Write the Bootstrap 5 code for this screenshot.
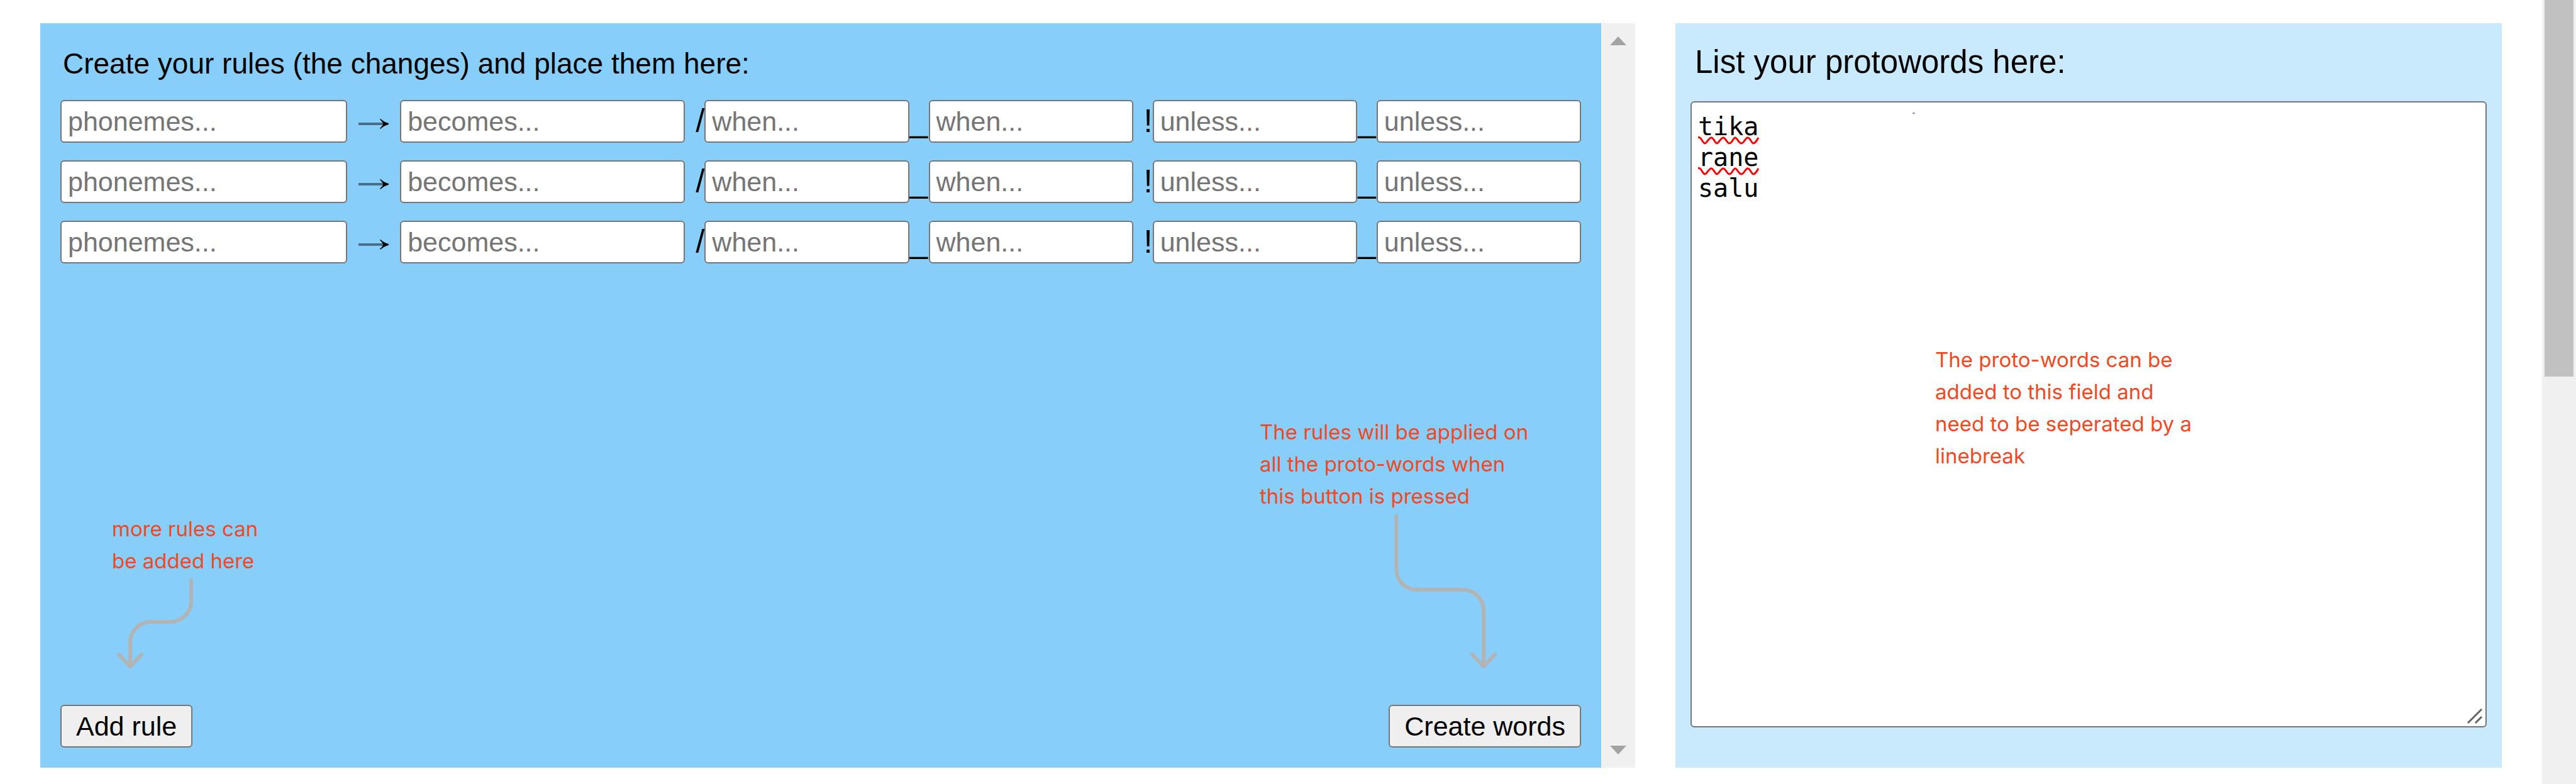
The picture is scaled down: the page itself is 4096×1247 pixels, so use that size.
<!DOCTYPE html>
<html lang="en">
<head>
<meta charset="utf-8">
<meta name="viewport" content="width=device-width, initial-scale=1">
<title>Sound change rules</title>
<link rel="stylesheet" href="https://cdn.jsdelivr.net/npm/bootstrap@5.3.0/dist/css/bootstrap.min.css">
<style>
  body { font-family: "Liberation Sans", Arial, sans-serif; font-size: 43px; color: #000; background: #fff; }
  .workspace { padding: 37px 64px 26px; gap: 64px; min-width: 0; }
  .rules-panel { flex: 2536 2536 2536px; min-width: 0; background: #87cefa; }
  .rules-body { padding: 32px; min-width: 0; }
  .words-panel { flex: 1314 1314 1314px; min-width: 0; background: #c9e9fd; padding: 30px 24px 64px; }
  .panel-title { font-size: 46px; line-height: 64px; margin: 0 0 26px; padding-left: 4px; font-weight: 400; }
  .words-title { font-size: 51px; line-height: 64px; margin: 0 0 30px; padding-left: 7px; }
  .rule-list { gap: 28px; }
  .rule-list .form-control { height: 68px; width: auto; min-width: 0; padding: 0 10px; font-size: 43px; line-height: 64px; border: 2px solid #767676; border-radius: 6px; color: #000; background: #fff; }
  .rule-list .form-control::placeholder { color: #757575; opacity: 1; }
  .seg-from { flex: 1 1 456px; }
  .seg-to { flex: 1 1 453px; }
  .seg-when { flex: 1 1 325px; }
  .sep { width: 31px; flex: none; font-size: 51px; line-height: 68px; display: flex; justify-content: flex-end; }
  .sep-gap { justify-content: center; }
  .sep-arrow { width: 84px; justify-content: center; align-items: center; padding-top: 8px; }
  .btn-plain { height: 68px; padding: 0 23px; font-size: 43px; line-height: 64px; color: #000; background: #efefef; border: 2px solid #767676; border-radius: 6px; white-space: nowrap; }
  .hint { font-family: Inter, sans-serif; font-size: 33px; font-weight: 400; line-height: 51px; color: #f24822; margin: 0; white-space: nowrap; }
  .hint-add { padding-left: 82px; }
  .hint-arrow { display: block; fill: none; stroke: #b3b3b3; stroke-width: 6; stroke-linecap: round; stroke-linejoin: round; }
  .hint-words { position: absolute; left: 389px; top: 386px; pointer-events: none; }
  .side-track { width: 54px; flex: none; background: #f0f0f0; padding: 21px 0; }
  .side-track svg { display: block; fill: #a3a3a3; }
  .page-track { width: 54px; flex: none; background: #f0f0f0; padding: 0 4px; }
  .page-thumb { height: 48%; background: #c1c1c1; }
  .words-box { position: relative; }
  .words-box textarea.form-control { height: 100%; resize: none; border: 2px solid #767676; border-radius: 6px; padding: 14px 10px; font-family: "DejaVu Sans Mono", monospace; font-size: 40px; line-height: 49px; color: #000; background: #fff; }
  .spell-marks { position: absolute; left: 12px; top: 17px; pointer-events: none; fill: none; stroke: #f00; stroke-width: 3; }
  .grip { position: absolute; right: 6px; bottom: 5px; pointer-events: none; stroke: #636363; stroke-width: 3; }
</style>
</head>
<body>
<svg class="d-none" aria-hidden="true">
  <symbol id="arrow-right" viewBox="0 0 48 18">
    <path d="M0 9H42" stroke="#496f87" stroke-width="4" fill="none"/>
    <path d="M35 1C38 3 40 6 48 8V10C40 12 38 15 35 17L34 16C37 13 39 11 39 9S37 5 34 2Z" fill="#000"/>
  </symbol>
</svg>
<div class="d-flex vh-100 overflow-hidden">
  <main class="workspace d-flex flex-grow-1">
    <section class="rules-panel d-flex">
      <div class="rules-body d-flex flex-column flex-grow-1">
        <h2 class="panel-title">Create your rules (the changes) and place them here:</h2>
        <div class="rule-list d-flex flex-column">
          <div class="d-flex">
            <input class="form-control seg-from" type="text" placeholder="phonemes..." aria-label="Phonemes">
            <span class="sep sep-arrow"><svg width="48" height="18" aria-hidden="true"><use href="#arrow-right"/></svg></span>
            <input class="form-control seg-to" type="text" placeholder="becomes..." aria-label="Becomes">
            <span class="sep">/</span>
            <input class="form-control seg-when" type="text" placeholder="when..." aria-label="When before">
            <span class="sep sep-gap">_</span>
            <input class="form-control seg-when" type="text" placeholder="when..." aria-label="When after">
            <span class="sep">!</span>
            <input class="form-control seg-when" type="text" placeholder="unless..." aria-label="Unless before">
            <span class="sep sep-gap">_</span>
            <input class="form-control seg-when" type="text" placeholder="unless..." aria-label="Unless after">
          </div>
          <div class="d-flex">
            <input class="form-control seg-from" type="text" placeholder="phonemes..." aria-label="Phonemes">
            <span class="sep sep-arrow"><svg width="48" height="18" aria-hidden="true"><use href="#arrow-right"/></svg></span>
            <input class="form-control seg-to" type="text" placeholder="becomes..." aria-label="Becomes">
            <span class="sep">/</span>
            <input class="form-control seg-when" type="text" placeholder="when..." aria-label="When before">
            <span class="sep sep-gap">_</span>
            <input class="form-control seg-when" type="text" placeholder="when..." aria-label="When after">
            <span class="sep">!</span>
            <input class="form-control seg-when" type="text" placeholder="unless..." aria-label="Unless before">
            <span class="sep sep-gap">_</span>
            <input class="form-control seg-when" type="text" placeholder="unless..." aria-label="Unless after">
          </div>
          <div class="d-flex">
            <input class="form-control seg-from" type="text" placeholder="phonemes..." aria-label="Phonemes">
            <span class="sep sep-arrow"><svg width="48" height="18" aria-hidden="true"><use href="#arrow-right"/></svg></span>
            <input class="form-control seg-to" type="text" placeholder="becomes..." aria-label="Becomes">
            <span class="sep">/</span>
            <input class="form-control seg-when" type="text" placeholder="when..." aria-label="When before">
            <span class="sep sep-gap">_</span>
            <input class="form-control seg-when" type="text" placeholder="when..." aria-label="When after">
            <span class="sep">!</span>
            <input class="form-control seg-when" type="text" placeholder="unless..." aria-label="Unless before">
            <span class="sep sep-gap">_</span>
            <input class="form-control seg-when" type="text" placeholder="unless..." aria-label="Unless after">
          </div>
        </div>
        <div class="d-flex justify-content-between align-items-end mt-auto">
          <div class="d-flex flex-column align-items-start">
            <p class="hint hint-add">more rules can<br>be added here</p>
            <svg class="hint-arrow" width="230" height="203" viewBox="0 0 230 203" aria-hidden="true"><path d="M208 5V38A33 33 0 0 1 175 71H144A33 33 0 0 0 111 104V141M93 123l18 19 18-19"/></svg>
            <button type="button" class="btn btn-plain">Add rule</button>
          </div>
          <div class="d-flex flex-column align-items-start">
            <p class="hint">The rules will be applied on<br>all the proto-words when<br>this button is pressed</p>
            <svg class="hint-arrow" width="511" height="306" viewBox="0 0 511 306" aria-hidden="true"><path d="M217 6V90A33 33 0 0 0 250 123H323A33 33 0 0 1 356 156V244M338 226l18 19 18-19"/></svg>
            <button type="button" class="btn btn-plain align-self-end">Create words</button>
          </div>
        </div>
      </div>
      <div class="side-track d-flex flex-column justify-content-between align-items-center" aria-hidden="true">
        <svg width="26" height="14" viewBox="0 0 26 14"><path d="M13 0L26 14H0Z"/></svg>
        <svg width="26" height="14" viewBox="0 0 26 14"><path d="M0 0H26L13 14Z"/></svg>
      </div>
    </section>
    <section class="words-panel d-flex flex-column">
      <label class="words-title" for="protowords">List your protowords here:</label>
      <div class="words-box flex-grow-1">
        <textarea class="form-control" id="protowords" spellcheck="false">tika
rane
salu</textarea>
        <svg class="spell-marks" width="346" height="110" viewBox="0 0 346 110" aria-hidden="true">
          <path d="M0 40L3 41C6 43 8 50 11 50S17 41 21 41 27 50 30 50 36 41 40 41 46 50 50 50 56 41 59 41 65 50 69 50 75 41 79 41 85 50 88 50 93 46 96 41"/>
          <path d="M0 89L3 90C6 92 8 99 11 99S17 90 21 90 27 99 30 99 36 90 40 90 46 99 50 99 56 90 59 90 65 99 69 99 75 90 79 90 85 99 88 99 93 95 96 90"/>
          <path d="M341 2h4" stroke="#8a93b8" stroke-width="2"/>
        </svg>
        <p class="hint hint-words">The proto-words can be<br>added to this field and<br>need to be seperated by a<br>linebreak</p>
        <svg class="grip" width="26" height="26" viewBox="0 0 26 26" aria-hidden="true"><path d="M2 24L24 2M14 24L24 14"/></svg>
      </div>
    </section>
  </main>
  <div class="page-track" aria-hidden="true"><div class="page-thumb"></div></div>
</div>
<script src="https://cdn.jsdelivr.net/npm/bootstrap@5.3.0/dist/js/bootstrap.bundle.min.js"></script>
</body>
</html>
